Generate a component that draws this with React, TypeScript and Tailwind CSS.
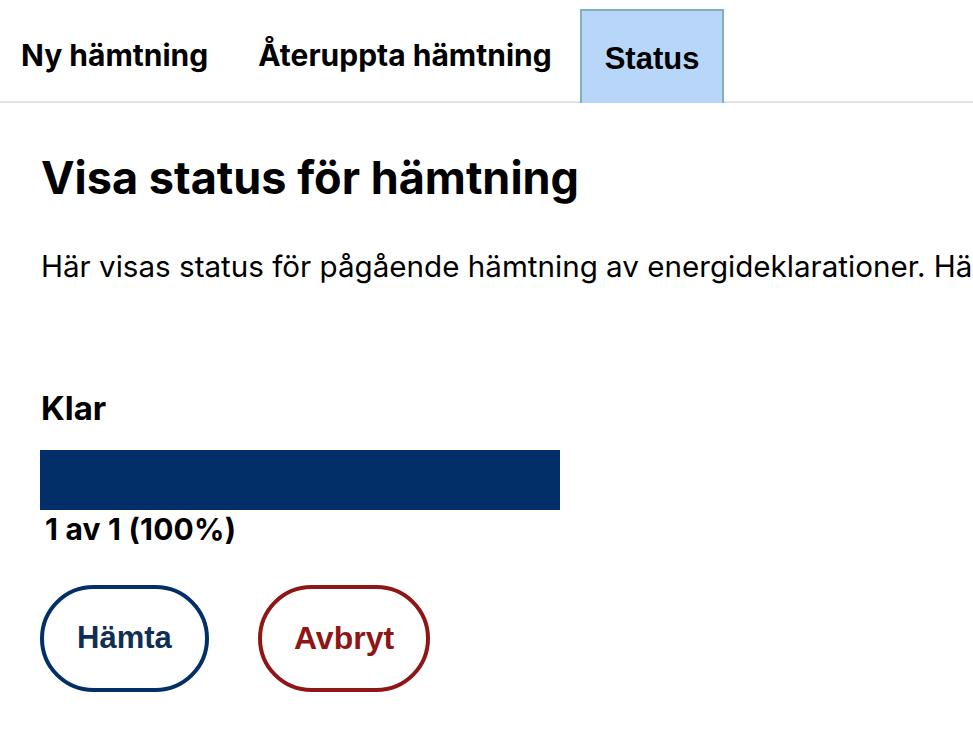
import { useState } from "react";

const TABS = ["Ny hämtning", "Återuppta hämtning", "Status"];

export default function App() {
  const [active, setActive] = useState("Status");
  const done = 1;
  const total = 1;
  const pct = Math.round((done / total) * 100);

  return (
    <div className="min-h-screen bg-white text-black overflow-hidden" style={{ fontFamily: "Inter, 'Noto Sans', sans-serif" }}>
      {/* Tabs */}
      <div className="flex items-end gap-[2px] pt-[9px] border-b-2 border-[#e3e3e3]">
        {TABS.map((t, i) => {
          const isActive = t === active;
          return (
            <button
              key={t}
              onClick={() => setActive(t)}
              className={`h-[94px] -mb-[2px] flex items-center whitespace-nowrap ${i === 0 ? "pl-[19px] pr-[20px]" : "px-6"} ${
                isActive
                  ? "bg-[#b8d6f8] border-2 border-b-0 border-[#7fb0bd] !px-[23px] font-['Liberation_Sans',Arial,sans-serif] text-[31px] font-bold pt-[4px]"
                  : "border-2 border-transparent text-[30px] font-bold pb-[2px]"
              }`}
            >
              {t}
            </button>
          );
        })}
      </div>

      <div className="pl-[41px] whitespace-nowrap">
        <h1 className="mt-[52px] text-[45px] font-bold leading-none">Visa status för hämtning</h1>
        <p className="mt-[52px] text-[29.6px] leading-none">
          Här visas status för pågående hämtning av energideklarationer. Här kan du också hämta resultatet när hämtningen är klar.
        </p>

        <div className="mt-[110px]">
          <div className="text-[33px] font-bold leading-none">Klar</div>
          <div className="mt-[25px] w-[520px] h-[60px] -ml-px bg-[#e5e7eb]">
            <div className="h-full bg-[#032f69]" style={{ width: `${pct}%` }} />
          </div>
          <div className="mt-[4px] ml-[4px] text-[30px] font-bold leading-none tracking-[0.2px]">
            {done} av {total} ({pct}%)
          </div>
        </div>

        <div className="mt-[41px] -ml-px flex gap-[49px] font-['Liberation_Sans',Arial,sans-serif]">
          <button className="w-[169px] h-[107px] rounded-full border-4 border-[#032f69] text-[#0f2f55] text-[31px] font-bold">
            Hämta
          </button>
          <button className="w-[172px] h-[107px] rounded-full border-4 border-[#8f1616] text-[#8f1616] text-[32px] font-bold">
            Avbryt
          </button>
        </div>
      </div>
    </div>
  );
}
